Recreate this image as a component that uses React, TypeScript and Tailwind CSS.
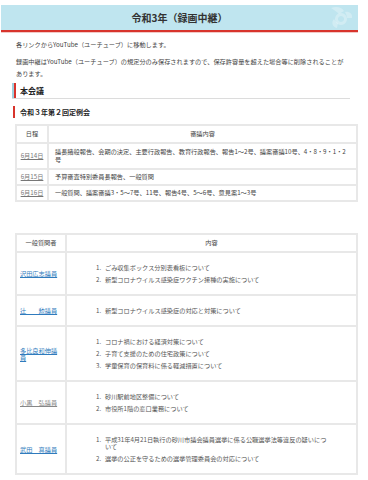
import React from "react";

const sessions = [
  {
    d: "6月14日",
    t: "議長諸般報告、会期の決定、主要行政報告、教育行政報告、報告1～2号、議案審議10号、4・8・9・1・2号",
  },
  { d: "6月15日", t: "予算審査特別委員長報告、一般質問" },
  { d: "6月16日", t: "一般質問、議案審議3・5～7号、11号、報告4号、5～6号、意見案1～3号" },
];

const questions: { name: string; visited?: boolean; items: string[] }[] = [
  {
    name: "沢田広志議員",
    items: ["ごみ収集ボックス分別表看板について", "新型コロナウイルス感染症ワクチン接種の実施について"],
  },
  { name: "辻　　勲議員", items: ["新型コロナウイルス感染症の対応と対策について"] },
  {
    name: "多比良和伸議員",
    items: ["コロナ禍における経済対策について", "子育て支援のための住宅政策について", "学童保育の保育料に係る軽減措置について"],
  },
  {
    name: "小黒　弘議員",
    visited: true,
    items: ["砂川駅前地区整備について", "市役所1階の窓口業務について"],
  },
  {
    name: "武田　真議員",
    items: [
      "平成31年4月21日執行の砂川市議会議員選挙に係る公職選挙法等違反の疑いにつ\nいて",
      "選挙の公正を守るための選挙管理委員会の対応について",
    ],
  },
];

export default function App() {
  return (
    <div className="w-[368px] h-[480px] overflow-hidden bg-white font-['Noto_Sans_CJK_JP','Noto_Sans',sans-serif] text-[#444]">
      <div className="w-[357px] ml-[1px] pt-[5px]">
        <header className="relative h-[27px] bg-[#bfe5ef] border-b-2 border-[#d8342c] flex items-center justify-center">
          <h1 className="text-[10px] font-bold text-[#333] leading-none">令和3年（録画中継）</h1>
          <svg className="absolute right-[4px] top-[1px]" width="26" height="24" viewBox="0 0 26 24">
            <g fill="#ffffff" fillOpacity="0.28">
              <path d="M3 2 C 8 0, 14 1, 16 5 L 11 8 C 9 6, 6 4, 3 2 Z" />
              <path d="M17 6 C 21 5, 25 8, 24 12 L 19 12 C 19 10, 18 8, 17 6 Z" />
              <path d="M6 13 C 3 16, 4 21, 9 22 L 10 17 C 8 16, 7 15, 6 13 Z" />
              <path d="M13 7 a 6 6 0 1 1 -0.01 0 Z M13 10 a 3 3 0 1 0 0.01 0 Z" fillRule="evenodd" />
            </g>
          </svg>
        </header>
        <div className="h-px bg-[#f2c9c6]" />

        <p className="mt-[6px] ml-[15px] text-[6.2px] leading-[12px]">各リンクからYouTube（ユーチューブ）に移動します。</p>
        <p className="mt-[5px] ml-[15px] w-[330px] text-[6.2px] leading-[12px]">
          録画中継はYouTube（ユーチューブ）の規定分のみ保存されますので、保存許容量を超えた場合等に削除されることがあります。
        </p>

        <div className="mt-[3px] ml-[11px] w-[338px] h-[16px] flex border-b border-[#dcdcdc]">
          <div className="w-[2px] bg-[#9fcfdd]" />
          <div className="w-[2px] bg-[#d8342c]" />
          <h2 className="ml-[4px] self-center text-[8px] font-bold text-[#222] leading-none">本会議</h2>
        </div>

        <div className="mt-[7px] ml-[12px] flex items-center h-[12px]">
          <div className="w-[2px] h-[12px] bg-[#d8342c]" />
          <h3 className="ml-[5px] text-[7px] font-bold text-[#222] leading-none">令和３年第２回定例会</h3>
        </div>

        <div className="mt-[6px] ml-[14px] w-[343px] grid grid-cols-[32px_1fr] border-t-2 border-l-2 border-[#e8e8e8] text-[6.2px] leading-[8px]">
          <div className="py-[4px] border-r-2 border-b-2 border-[#e8e8e8] text-center">日程</div>
          <div className="py-[4px] border-r-2 border-b-2 border-[#e8e8e8] text-center">審議内容</div>
          {sessions.map((s, i) => (
            <React.Fragment key={s.d}>
              <div className={(i === 0 ? "py-[4px]" : "py-[3px]") + " border-r-2 border-b-2 border-[#e8e8e8] flex items-center justify-center"}>
                <a href="#" className="text-[#777] underline">{s.d}</a>
              </div>
              <div className={(i === 0 ? "py-[4px]" : "py-[3px]") + " pl-[6px] pr-[10px] border-r-2 border-b-2 border-[#e8e8e8]"}>{s.t}</div>
            </React.Fragment>
          ))}
        </div>

        <div className="mt-[31px] ml-[14px] w-[343px] grid grid-cols-[50px_1fr] border-t-2 border-l-2 border-[#e8e8e8] text-[6.2px]">
          <div className="py-[4px] leading-[8px] border-r-2 border-b-2 border-[#e8e8e8] text-center">一般質問者</div>
          <div className="py-[4px] leading-[8px] border-r-2 border-b-2 border-[#e8e8e8] text-center">内容</div>
          {questions.map((q) => (
            <React.Fragment key={q.name}>
              <div className="pl-[3px] pr-[6px] border-r-2 border-b-2 border-[#e8e8e8] flex items-center leading-[7px]">
                <a href="#" className={q.visited ? "text-[#888] underline" : "text-[#2f7bbd] underline"}>{q.name}</a>
              </div>
              <div className="py-[11px] pl-[29px] pr-[14px] border-r-2 border-b-2 border-[#e8e8e8] text-[#555]">
                <ol className="flex flex-col gap-[5px] leading-[7px]">
                  {q.items.map((it, i) => (
                    <li key={i} className="flex">
                      <span className="w-[9px] shrink-0">{i + 1}.</span>
                      <span className="whitespace-pre-line">{it}</span>
                    </li>
                  ))}
                </ol>
              </div>
            </React.Fragment>
          ))}
        </div>
      </div>
    </div>
  );
}
